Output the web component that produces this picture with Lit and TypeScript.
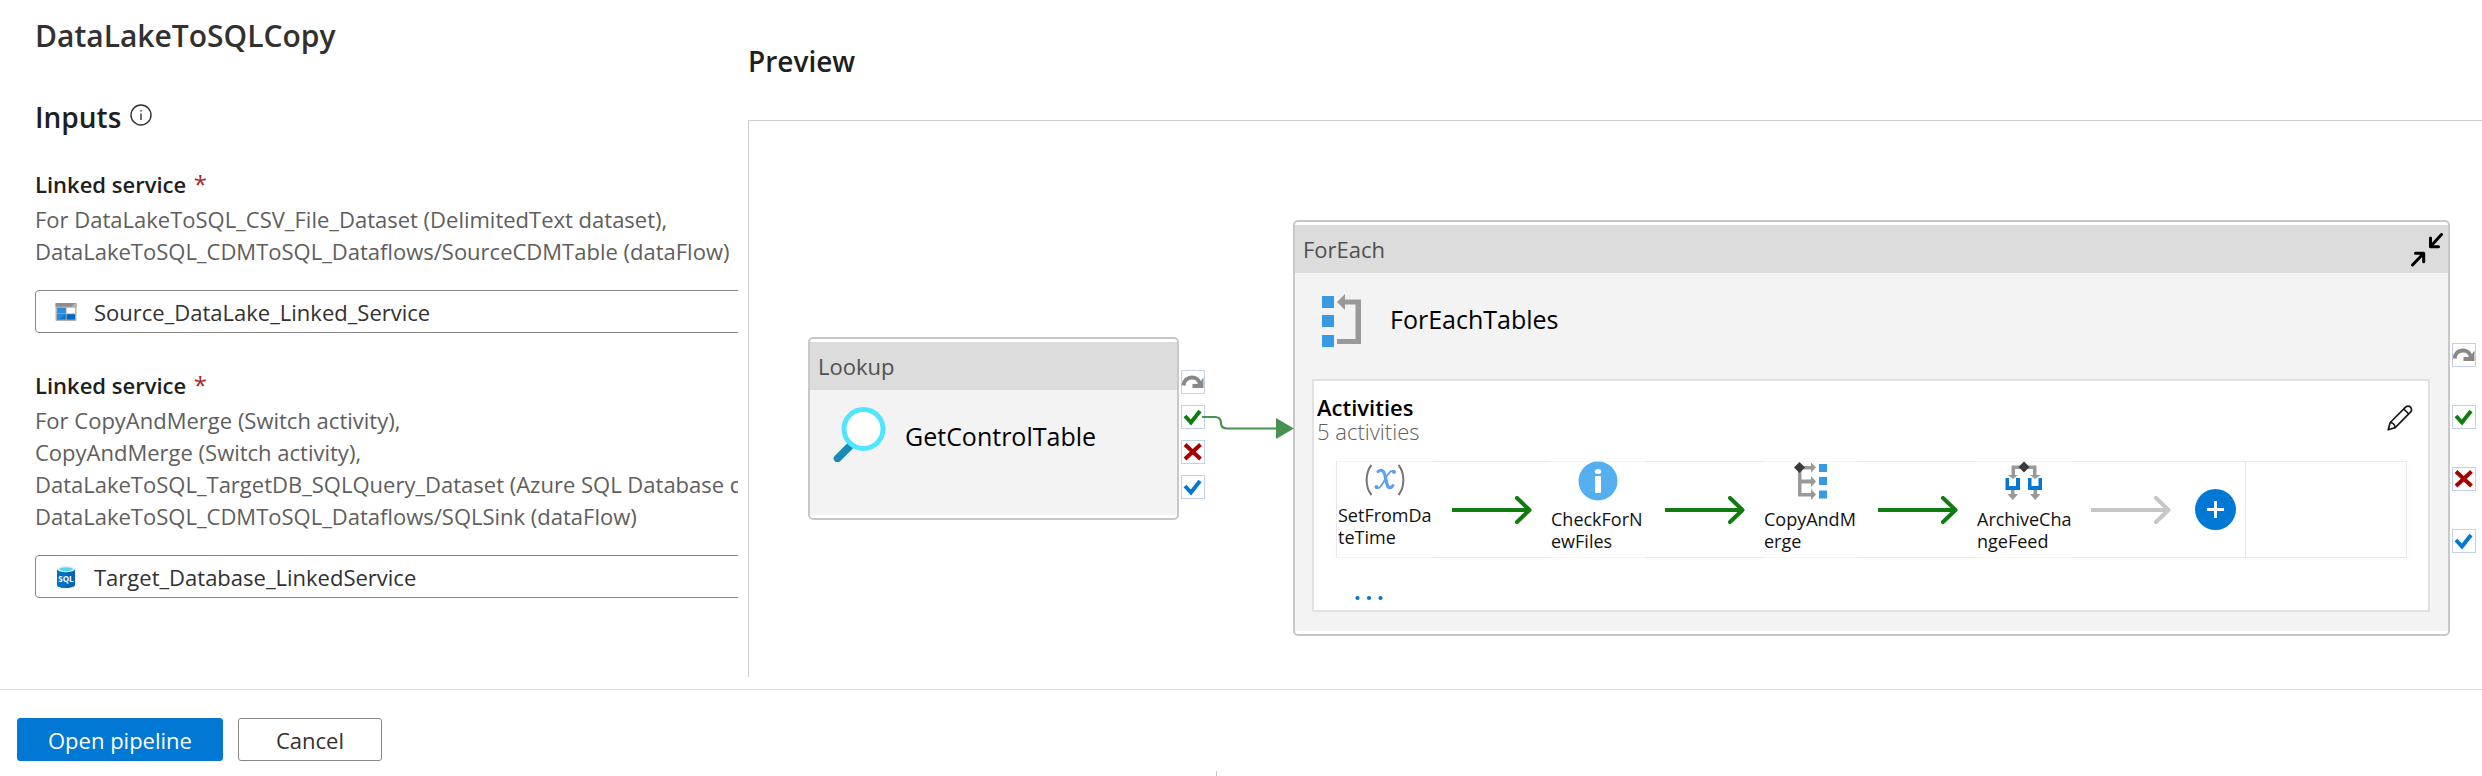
import { LitElement, html, css, svg, nothing } from "lit";
import { customElement, property } from "lit/decorators.js";

/* ---------- icons ---------- */

const infoOutline = html`<svg width="22" height="22" viewBox="0 0 22 22" fill="none" stroke="#323130" stroke-width="1.4" aria-hidden="true">
  <circle cx="11" cy="11" r="10" /><path d="M11 9.500v6.500" /><path d="M11 6v1.600" />
</svg>`;

const storageIcon = html`<svg width="22" height="22" viewBox="0 0 22 22" aria-hidden="true">
  <rect x="0.5" y="2" width="21" height="18" rx="1" fill="#b3b3b3" />
  <path d="M1.5 2h19a1 1 0 0 1 1 1v2.600h-21V3a1 1 0 0 1 1-1z" fill="#8c8c8c" />
  <path d="M20 2.600 16.500 5.600h5V3z" fill="#b8b8b8" />
  <rect x="2.200" y="6.800" width="8.600" height="5.600" fill="#2e8ad6" />
  <rect x="11.600" y="6.800" width="8.400" height="5.600" fill="#fff" />
  <rect x="2.200" y="13.200" width="8.600" height="5.400" fill="#0078d4" />
  <rect x="11.600" y="13.200" width="8.400" height="5.400" fill="#0068c0" />
  <path d="M2.200 13.200h7.500l-5.400 5.400H2.200z" fill="#2e8ad6" />
</svg>`;

const sqlIcon = html`<svg width="22" height="24" viewBox="0 0 22 24" aria-hidden="true">
  <path d="M2 4v16c0 1.600 4 3 9 3s9-1.400 9-3V4z" fill="#0067b8" />
  <path d="M2 4v16c0 1.600 4 3 9 3V4z" fill="#0072c6" />
  <ellipse cx="11" cy="4" rx="9" ry="3.200" fill="#e8f4fb" />
  <ellipse cx="11" cy="4.200" rx="6.800" ry="2" fill="#50d6ee" />
  <text x="11" y="16.500" text-anchor="middle" font-family="Open Sans, sans-serif" font-size="8" font-weight="700" fill="#fff">SQL</text>
</svg>`;

const magnifier = html`<svg width="54" height="56" viewBox="0 0 54 56" fill="none" aria-hidden="true">
  <path d="M20 38 5.500 52.500" stroke="#198ab3" stroke-width="7.500" stroke-linecap="round" />
  <circle cx="31.500" cy="23" r="19.500" fill="#fff" stroke="#50e6ff" stroke-width="5" />
</svg>`;

const loopIcon = html`<svg width="40" height="54" viewBox="0 0 40 54" aria-hidden="true">
  <g fill="#379ae5"><rect x="1" y="2" width="12" height="12" /><rect x="1" y="21" width="12" height="12" /><rect x="1" y="41" width="12" height="12" /></g>
  <path d="M16 8 24 0v5.500h16v44.500H16v-5h18.500V10.500H24V16z" fill="#999" />
</svg>`;

const collapseIcon = html`<svg width="32" height="34" viewBox="0 0 32 34" fill="none" stroke="#000" stroke-width="3" stroke-linejoin="round" stroke-linecap="round" aria-hidden="true">
  <path d="M30.500 1.500 19.500 13.500M19.500 5v8.700h8" />
  <path d="M1.500 32 12.500 20.500M4.500 20.300h8.200v8.500" />
</svg>`;

const pencil = html`<svg width="26" height="26" viewBox="0 0 26 26" fill="none" stroke="#1b1a19" stroke-width="1.700" stroke-linejoin="round" aria-hidden="true">
  <path d="M1.200 24.800 3.200 17.500 18.600 2.200a3.400 3.400 0 0 1 4.900 0 3.400 3.400 0 0 1 0 4.900L8.200 22.600z" />
  <path d="M3.200 17.500c2.300.2 4.600 2.300 5 5.100M16.800 4l5 5" />
</svg>`;

const variableIcon = html`<svg width="40" height="34" viewBox="0 0 40 34" fill="none" aria-hidden="true">
  <path d="M6.500 2C0 10 0 24 6.500 32M33.500 2C40 10 40 24 33.500 32" stroke="#767676" stroke-width="2" />
  <path d="M13 8.500c3.500-2.500 5.800-1 6.700 3l2.300 9.500c1 4.200 3.200 4.800 5.800 1.700" stroke="#5ea0ef" stroke-width="3.200" stroke-linecap="round" />
  <path d="M29.500 8.500c-3-2-5.500.5-8.500 6l-3 5.500c-2 3.600-4.500 6.500-7 4.500" stroke="#5ea0ef" stroke-width="1.800" stroke-linecap="round" />
  <circle cx="29" cy="9" r="2" fill="#5ea0ef" /><circle cx="11.500" cy="24" r="2" fill="#5ea0ef" />
</svg>`;

const metadataIcon = html`<svg width="40" height="40" viewBox="0 0 40 40" aria-hidden="true">
  <circle cx="20" cy="20" r="19.500" fill="#55aef0" />
  <ellipse cx="20" cy="10.500" rx="3.200" ry="2.500" fill="#fff" />
  <rect x="17" y="15" width="6" height="17" rx="1.200" fill="#fff" />
</svg>`;

const switchIcon = html`<svg width="34" height="40" viewBox="0 0 34 40" aria-hidden="true">
  <g fill="#999">
    <path d="M4 6h3.500v12.500H17V15l5 5.500-5 5.500v-3.500H7.500v9.500H17V28l5 5.500-5 5.500v-3.500H4z" />
    <path d="M7 5h10V1.500l5 5-5 5V8.500H7z" />
  </g>
  <path d="M5.500 1 11 6.500 5.500 12 0 6.500z" fill="#3b3b3b" />
  <g fill="#379ae5"><rect x="25" y="3" width="8" height="8" /><rect x="25" y="16" width="8" height="8" /><rect x="25" y="29.500" width="8" height="8" /></g>
</svg>`;

const conditionIcon = html`<svg width="38" height="40" viewBox="0 0 38 40" aria-hidden="true">
  <path d="M6.500 4.500h25v9.500h4.500l-6 4-5-4h3V8h-18v6h3l-5 4-5-4h3.500z" fill="#999" />
  <path d="M6 27h3.500v6H13l-5.200 6L2.500 33H6zM28.500 27H32v6h3.500l-5.300 6L25 33h3.500z" fill="#999" />
  <path d="M19 0.500 24.500 6 19 11.500 13.500 6z" fill="#3b3b3b" />
  <path d="M0.500 17H4v8h7v-8h4v12H.5zM23 17h3.500v8h7v-8H37v12H23z" fill="#0078d4" />
</svg>`;

const nextArrow = (color: string) => html`<svg width="80" height="28" viewBox="0 0 80 28" fill="none" stroke=${color} stroke-width="4" aria-hidden="true">
  <path d="M0 14h77" /><path d="M65 2 77.500 14 65 26" stroke-linecap="round" stroke-linejoin="round" />
</svg>`;

const plusIcon = html`<svg width="41" height="41" viewBox="0 0 41 41" aria-hidden="true">
  <circle cx="20.500" cy="20.500" r="20.500" fill="#0078d4" />
  <path d="M20.500 12v17M12 20.500h17" stroke="#fff" stroke-width="3" />
</svg>`;

const dotsIcon = html`<svg width="28" height="6" viewBox="0 0 28 6" fill="#0078d4" aria-hidden="true">
  <circle cx="2.500" cy="3" r="2.100" /><circle cx="14" cy="3" r="2.100" /><circle cx="25.500" cy="3" r="2.100" />
</svg>`;

/* Outcome ports drawn down the right side of an activity */
const ports = [
  { name: "Skipped", mark: svg`<path d="M2.500 15.500C3.500 5 17.500 5 19 14.500" stroke="#8a8886" stroke-width="4" fill="none" /><path d="M22.500 7.500v10.500H11.500v-4h5.500l2.500-2.500z" fill="#8a8886" />` },
  { name: "Succeeded", mark: svg`<path d="M4 11l6 6.500L19 6" stroke="#107c10" stroke-width="4" fill="none" />` },
  { name: "Failed", mark: svg`<path d="M4 4.500 19.500 19M19.500 4.500 4 19" stroke="#a80000" stroke-width="4" fill="none" />` },
  { name: "Completed", mark: svg`<path d="M4 11l6 6.500L19 6" stroke="#0078d4" stroke-width="4" fill="none" />` },
];

const activities = [
  { name: "SetFromDateTime", icon: variableIcon, compact: true },
  { name: "CheckForNewFiles", icon: metadataIcon, compact: false },
  { name: "CopyAndMerge", icon: switchIcon, compact: false },
  { name: "ArchiveChangeFeed", icon: conditionIcon, compact: false },
];

const services = [
  {
    id: "source",
    uses: ["For DataLakeToSQL_CSV_File_Dataset (DelimitedText dataset),", "DataLakeToSQL_CDMToSQL_Dataflows/SourceCDMTable (dataFlow)"],
    icon: storageIcon,
    value: "Source_DataLake_Linked_Service",
  },
  {
    id: "target",
    uses: [
      "For CopyAndMerge (Switch activity),",
      "CopyAndMerge (Switch activity),",
      "DataLakeToSQL_TargetDB_SQLQuery_Dataset (Azure SQL Database dataset),",
      "DataLakeToSQL_CDMToSQL_Dataflows/SQLSink (dataFlow)",
    ],
    icon: sqlIcon,
    value: "Target_Database_LinkedService",
  },
];

/* ---------- activity node ---------- */

@customElement("activity-node")
class ActivityNode extends LitElement {
  @property() kind = "";
  @property() name = "";
  @property({ type: Boolean }) container = false;

  static styles = css`
    :host { display: block; box-sizing: border-box; border: 2px solid #c8c8c8; border-radius: 5px; background: #fff; padding: 3px 0 3px; }
    svg { display: block; }
    .card { display: flex; flex-direction: column; height: 100%; background: #f3f3f3; }
    .head { display: flex; justify-content: space-between; height: 48px; box-sizing: border-box; background: #dcdcdc; padding: 8px 5px 0 8px; }
    .kind { font-size: 22px; line-height: 32px; color: #505050; }
    .collapse { border: 0; padding: 0; margin: 0; background: none; height: 34px; }
    .title { display: flex; align-items: flex-start; gap: 19px; padding: 16px 22px 0; }
    .container .title { padding: 21px 26px 0; gap: 29px; }
    .name { font-size: 25px; line-height: 36px; color: #000; padding-top: 12px; }
    .container .name { padding-top: 7px; }
    .ports { position: absolute; left: calc(100% + 4px); top: 31px; display: flex; flex-direction: column; gap: 11px; list-style: none; margin: 0; padding: 0; }
    .container .ports { top: 121px; gap: 38px; }
    .port { box-sizing: border-box; width: 24px; height: 24px; border: 1px solid #c3d0ef; background: #fff; }
    .port svg { margin: -1px; }
  `;

  render() {
    return html`<div class="card ${this.container ? "container" : ""}">
      <div class="head">
        <span class="kind">${this.kind}</span>
        ${this.container ? html`<button class="collapse" type="button" aria-label="Collapse">${collapseIcon}</button>` : nothing}
      </div>
      <div class="title"><slot name="icon"></slot><span class="name">${this.name}</span></div>
      <slot></slot>
      <ul class="ports">
        ${ports.map((p) => html`<li class="port" aria-label=${p.name}><svg width="24" height="24" viewBox="0 0 24 24">${p.mark}</svg></li>`)}
      </ul>
    </div>`;
  }
}

/* ---------- page ---------- */

@customElement("app-root")
class AppRoot extends LitElement {
  static styles = css`
    :host { display: flex; flex-direction: column; min-height: 100vh; background: #fff; color: #201f1e; font-family: "Open Sans", "Noto Sans", sans-serif; }
    svg { display: block; }
    h1, h2, h3, p { margin: 0; }
    .main { flex: 1; display: grid; grid-template-columns: 738px minmax(0, 1fr); column-gap: 10px; padding-bottom: 12px; }
    .side { overflow: hidden; padding: 16px 0 0 35px; }
    .page-title { font-size: 30px; line-height: 40px; font-weight: 600; color: #323130; }
    .section { display: flex; align-items: center; gap: 9px; margin-top: 41px; font-size: 28px; line-height: 40px; font-weight: 600; }
    .section svg { margin-bottom: 4px; }
    .service { margin-top: 31px; }
    .service + .service { margin-top: 36px; }
    .label { display: block; font-size: 22px; line-height: 32px; font-weight: 600; }
    .star { color: #a4262c; font-size: 24px; line-height: 24px; font-weight: 400; margin-left: 2px; }
    .uses { margin-top: 3px; font-size: 22px; line-height: 32px; color: #605e5c; white-space: nowrap; }
    .use { display: block; }
    .field { display: flex; align-items: center; gap: 17px; height: 43px; box-sizing: border-box; margin: 23px -24px 0 0; padding-left: 19px; border: 1px solid #8a8886; border-radius: 4px; }
    .input { flex: 1; border: 0; outline: 0; padding: 0; background: none; font: inherit; font-size: 22px; line-height: 32px; color: #323130; }
    .preview { display: flex; flex-direction: column; min-width: 0; }
    .preview-title { margin: 41px 0 39px; font-size: 28px; line-height: 40px; font-weight: 600; }
    .canvas { position: relative; flex: 1; min-height: 556px; overflow: hidden; border: solid #d2d0ce; border-width: 1px 0 0 1px; }
    .lookup { position: absolute; left: 59px; top: 216px; width: 371px; height: 183px; }
    .foreach { position: absolute; left: 544px; top: 99px; width: 1157px; height: 416px; }
    .link { position: absolute; left: 453px; top: 290px; }
    .panel { display: flex; flex-direction: column; margin: 31px 18px 0 17px; height: 233px; box-sizing: border-box; border: 2px solid #e1e1e1; background: #fff; }
    .panel-head { display: flex; justify-content: space-between; padding: 14px 15px 0 3px; }
    .panel-title { font-size: 22px; line-height: 24px; font-weight: 600; color: #000; }
    .count { font-size: 22px; line-height: 24px; font-weight: 300; color: #605e5c; }
    .icon-button { border: 0; margin: 0; padding: 0; background: none; font: inherit; }
    .edit { padding-top: 10px; height: 36px; }
    .strip { display: grid; grid-template-columns: repeat(3, 96px 117px) 96px 174px minmax(0, 1fr); margin: 18px 21px 0 22px; height: 97px; box-sizing: border-box; border-left: 1px solid #e3e9f8; border-right: 1px solid #e3e9f8; }
    .item { display: flex; flex-direction: column; align-items: center; gap: 7px; border: solid #f3f5fc; border-width: 1px 0; }
    .item svg { margin-top: -1px; }
    .item.compact { padding-top: 2px; }
    .item-name { width: 100%; font-size: 18px; line-height: 22px; color: #111; word-break: break-all; padding-left: 1px; box-sizing: border-box; }
    .flow { display: flex; align-items: center; padding-left: 19px; border: solid #e3e9f8; border-width: 1px 0; }
    .flow.last { gap: 24px; border-right-width: 1px; }
    .rest { border: solid #e3e9f8; border-width: 1px 0; }
    .more { align-self: flex-start; margin: 37px 0 0 41px; height: 6px; }
    .footer { position: relative; display: flex; gap: 15px; padding: 28px 17px 15px; border-top: 1px solid #dcdcdc; }
    .footer::after { content: ""; position: absolute; left: 49%; bottom: 0; width: 1px; height: 5px; background: #c8c8c8; }
    .button { height: 43px; box-sizing: border-box; margin: 0; padding: 0 37px; border: 1px solid #8a8886; border-radius: 3px; background: #fff; color: #323130; font: inherit; font-size: 22px; line-height: 32px; }
    .primary { padding: 0 30px; border-color: #0078d4; background: #0078d4; color: #fff; }
  `;

  renderService(s: (typeof services)[number]) {
    return html`<div class="service">
      <label class="label" for=${s.id}>Linked service <span class="star">*</span></label>
      <p class="uses">${s.uses.map((u) => html`<span class="use">${u}</span>`)}</p>
      <div class="field">${s.icon}<input class="input" id=${s.id} type="text" .value=${s.value} /></div>
    </div>`;
  }

  renderActivity(a: (typeof activities)[number], last: boolean) {
    return html`<div class="item ${a.compact ? "compact" : ""}">${a.icon}<span class="item-name">${a.name}</span></div>
      <div class="flow ${last ? "last" : ""}">
        ${nextArrow(last ? "#c8c6c4" : "#107c10")}
        ${last ? html`<button class="icon-button" type="button" aria-label="Add activity">${plusIcon}</button>` : nothing}
      </div>`;
  }

  render() {
    return html`
      <main class="main">
        <section class="side">
          <h1 class="page-title">DataLakeToSQLCopy</h1>
          <h2 class="section">Inputs ${infoOutline}</h2>
          ${services.map((s) => this.renderService(s))}
        </section>
        <section class="preview">
          <h2 class="preview-title">Preview</h2>
          <div class="canvas">
            <activity-node class="lookup" kind="Lookup" name="GetControlTable"><span slot="icon">${magnifier}</span></activity-node>
            <activity-node class="foreach" kind="ForEach" name="ForEachTables" container>
              <span slot="icon">${loopIcon}</span>
              <div class="panel">
                <div class="panel-head">
                  <div>
                    <h3 class="panel-title">Activities</h3>
                    <p class="count">5 activities</p>
                  </div>
                  <button class="icon-button edit" type="button" aria-label="Edit activities">${pencil}</button>
                </div>
                <div class="strip">
                  ${activities.map((a, i) => this.renderActivity(a, i === activities.length - 1))}
                  <div class="rest"></div>
                </div>
                <button class="icon-button more" type="button" aria-label="Show more activities">${dotsIcon}</button>
              </div>
            </activity-node>
            <svg class="link" width="92" height="28" viewBox="0 0 92 28" aria-hidden="true">
              <path d="M0 6h13q6 0 6 6 0 5.500 6 5.500h50" fill="none" stroke="#4a9150" stroke-width="2.200" />
              <path d="M74 7v21l18-10.500z" fill="#4a9150" />
            </svg>
          </div>
        </section>
      </main>
      <footer class="footer">
        <button class="button primary" type="button">Open pipeline</button>
        <button class="button" type="button">Cancel</button>
      </footer>
    `;
  }
}
